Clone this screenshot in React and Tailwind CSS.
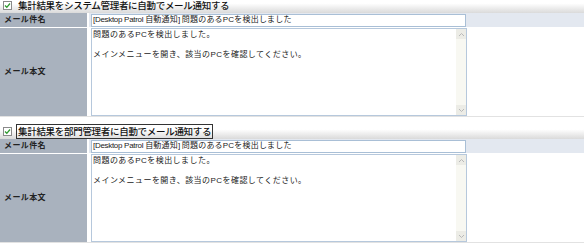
import React from "react"

const font = { fontFamily: '"Liberation Sans", "Noto Sans CJK JP", sans-serif' }

function CheckBox() {
  return (
    <span className="flex h-[9px] w-[9px] items-center justify-center border border-[#8a8a8a] bg-white">
      <svg width="7" height="7" viewBox="0 0 7 7">
        <path d="M1 3.5 L2.8 5.3 L6 1.5" fill="none" stroke="#2f9a2f" strokeWidth="1.3" />
      </svg>
    </span>
  )
}

function ScrollBar() {
  return (
    <div className="flex w-[10px] flex-col justify-between bg-[#f8f8f2]">
      <div className="flex h-[10px] items-center justify-center bg-[#ecece6]">
        <svg width="7" height="5" viewBox="0 0 7 5">
          <path d="M1 4 L3.5 1.5 L6 4" fill="none" stroke="#b9b9b9" strokeWidth="1" />
        </svg>
      </div>
      <div className="flex h-[10px] items-center justify-center bg-[#ecece6]">
        <svg width="7" height="5" viewBox="0 0 7 5">
          <path d="M1 1 L3.5 3.5 L6 1" fill="none" stroke="#b9b9b9" strokeWidth="1" />
        </svg>
      </div>
    </div>
  )
}

function Section({ title, focused, className }) {
  return (
    <div className={className}>
      <div className="flex h-[16px] items-center gap-[4px] bg-gradient-to-b from-white from-40% to-[#dadada] pl-[3px]">
        <CheckBox />
        <span
          className={
            "text-[9.5px] font-medium leading-[13px] tracking-[-0.3px] text-[#111] " +
            (focused ? "border border-[#333] px-[1px]" : "border border-transparent px-[1px]")
          }
        >
          {title}
        </span>
      </div>
      <div className="flex h-[14px]">
        <div className="flex w-[87px] items-center bg-[#a9b2be] pl-[4px] text-[8px] font-bold tracking-[0.4px] text-[#222]">
          メール件名
        </div>
        <div className="ml-[2px] flex flex-1 items-center bg-[#e3e8f0] pl-[2px]">
          <div className="flex h-[13px] w-[375px] items-center border border-[#a9bfd6] bg-white pl-[1px] text-[8px] tracking-[0.2px] text-[#222]">
            <span className="tracking-[-0.3px]">[Desktop Patrol&nbsp;</span>
            自動通知
            <span className="tracking-[-0.3px]">]&nbsp;</span>
            問題のあるPCを検出しました
          </div>
        </div>
      </div>
      <div className="mt-[1px] flex h-[89px] border-b border-[#e2e2e2]">
        <div className="flex w-[87px] items-center bg-[#a9b2be] pl-[4px] text-[8px] font-bold tracking-[0.4px] text-[#222]">
          メール本文
        </div>
        <div className="ml-[4px] flex w-[376px] border border-[#b6c8dc] bg-white">
          <div className="flex-1 pl-[1px] pt-[1px] text-[8px] leading-[10px] tracking-[0.45px] text-[#222]">
            <div>問題のあるPCを検出しました。</div>
            <div>&nbsp;</div>
            <div>メインメニューを開き、該当のPCを確認してください。</div>
          </div>
          <ScrollBar />
        </div>
      </div>
    </div>
  )
}

export default function App() {
  return (
    <div className="h-[247px] w-[584px] overflow-hidden bg-white" style={font}>
      <Section className="-mt-[3px]" title="集計結果をシステム管理者に自動でメール通知する" />
      <Section className="mt-[6px]" title="集計結果を部門管理者に自動でメール通知する" focused />
    </div>
  )
}
